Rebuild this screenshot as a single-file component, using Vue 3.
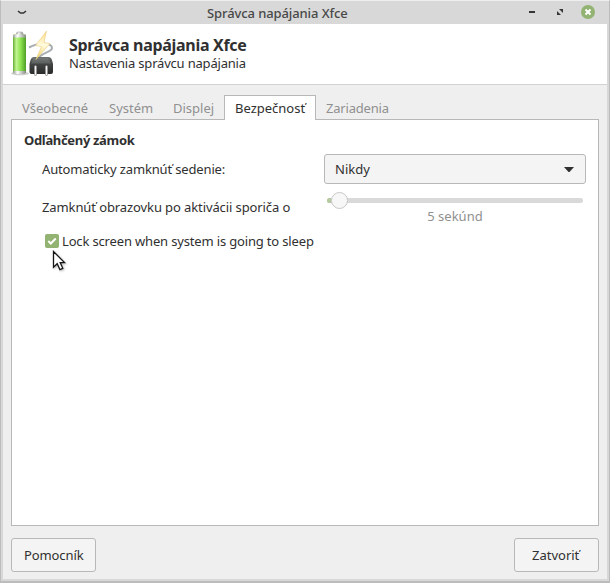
<script setup>
import { ref } from 'vue'

const tabs = [
  { name: 'Všeobecné', key: 'general' },
  { name: 'Systém', key: 'system' },
  { name: 'Displej', key: 'display' },
  { name: 'Bezpečnosť', key: 'security' },
  { name: 'Zariadenia', key: 'devices' },
]
const active = ref('security')
const lockOnSleep = ref(true)
</script>

<template>
  <div class="window">
    <header class="titlebar">
      <svg class="menu" width="10" height="6" viewBox="0 0 10 6"><path d="M1 1L3.500 3h3L9 1" fill="none" stroke="#353535" stroke-width="1.600" /></svg>
      <span class="title">Správca napájania Xfce</span>
      <div class="controls">
        <svg width="6" height="2"><path d="M0 0h6v2H0z" fill="#353535" /></svg>
        <svg width="6" height="6" viewBox="0 0 6 6"><path d="M2 0h4v4zM0 2v4h4z" fill="#353535" /></svg>
        <svg width="14" height="14" viewBox="0 0 14 14"><circle cx="7" cy="7" r="7" fill="#92b372" /><path d="M4.500 4.500l5 5m0-5l-5 5" stroke="#fff" stroke-width="2" /></svg>
      </div>
    </header>

    <section class="banner">
      <svg class="logo" width="48" height="48" viewBox="0 0 48 48">
        <defs>
          <linearGradient id="cell"><stop offset="0" stop-color="#63ad32" /><stop offset=".25" stop-color="#c2f592" /><stop offset=".6" stop-color="#8be24c" /><stop offset="1" stop-color="#4f9e29" /></linearGradient>
          <linearGradient id="metal"><stop offset="0" stop-color="#999" /><stop offset=".35" stop-color="#fff" /><stop offset="1" stop-color="#888" /></linearGradient>
          <linearGradient id="bolt" x2="0" y2="1"><stop offset="0" stop-color="#ffdc85" /><stop offset=".5" stop-color="#fffbe0" /><stop offset="1" stop-color="#f4ce58" /></linearGradient>
          <linearGradient id="plug" x2="0" y2="1"><stop offset="0" stop-color="#6e7270" /><stop offset=".35" stop-color="#444745" /><stop offset="1" stop-color="#282b29" /></linearGradient>
        </defs>
        <ellipse cx="9" cy="43.500" rx="9" ry="1.800" fill="#d0d0d0" />
        <rect x="5.500" y="2" width="6.500" height="4" rx="1.500" fill="url(#metal)" stroke="#999" stroke-width=".5" />
        <path d="M2 5.500Q2 4 8.500 4T15 5.500V42Q15 44 8.500 44T2 42z" fill="url(#cell)" />
        <path d="M2 5.500Q2 4 8.500 4T15 5.500V7.500H2zM2 41h13v1Q15 44 8.500 44T2 42z" fill="url(#metal)" />
        <path d="M18 17.500C28 12 41 13 41 18C41 22 33 22 28 27" fill="none" stroke="#a9aeb0" stroke-width="2" />
        <path d="M23 27h14.500q2.500 0 3.500 3l1 4v8q0 2-2 2H20.500q-2 0-2-2v-8l1-4q1-3 3.500-3z" fill="url(#plug)" />
        <path d="M22.500 28h14.500l3 5.500H20z" fill="#858987" opacity=".4" />
        <path d="M24.500 36.500v8M35.500 36.500v8" stroke="#777" stroke-width="2.600" stroke-linecap="round" />
        <path d="M24.500 36.500v8M35.500 36.500v8" stroke="#f4f4f4" stroke-width="1.600" stroke-linecap="round" />
        <path d="M35.500 1L24.500 15.500l6 1-5.500 13L39 13.500l-6-1z" fill="url(#bolt)" stroke="#edcc80" stroke-width=".6" />
      </svg>
      <div class="heading">
        <h1>Správca napájania Xfce</h1>
        <p>Nastavenia správcu napájania</p>
      </div>
    </section>

    <main class="content">
      <nav class="tabs">
        <button v-for="tab in tabs" :key="tab.key" :class="['tab', tab.key, { active: active === tab.key }]" @click="active = tab.key">{{ tab.name }}</button>
      </nav>
      <div class="page">
        <h2>Odľahčený zámok</h2>
        <div class="row">
          <span class="label auto">Automaticky zamknúť sedenie:</span>
          <button class="combo">
            <span>Nikdy</span>
            <svg width="10" height="5" viewBox="0 0 10 5"><path d="M0 0h10L5.500 5h-1z" fill="#303030" /></svg>
          </button>
        </div>
        <div class="row delay">
          <span class="label screen">Zamknúť obrazovku po aktivácii sporiča o</span>
          <div class="scale">
            <div class="track"><div class="fill"></div><div class="knob"></div></div>
            <span class="value">5 sekúnd</span>
          </div>
        </div>
        <div class="check" @click="lockOnSleep = !lockOnSleep">
          <svg width="14" height="14" viewBox="0 0 14 14"><rect width="14" height="14" rx="2" fill="#92b372" /><path v-if="lockOnSleep" d="M3.300 7l2.500 2.500L10.700 4.500" fill="none" stroke="#fff" stroke-width="2" /></svg>
          <span>Lock screen when system is going to sleep</span>
        </div>
      </div>
      <footer>
        <button class="action help">Pomocník</button>
        <button class="action close">Zatvoriť</button>
      </footer>
    </main>
    <svg class="pointer" width="15" height="22" viewBox="0 0 15 22"><path d="M1.500 1.500v15.700l3.700-3.500 2.700 5.900 2.900-1.300-2.600-5.700h4.300z" fill="#fff" stroke="#151515" stroke-width="1.300" /></svg>
  </div>
</template>

<style>
body { margin: 0; overflow: hidden; background: #fff; }
</style>

<style scoped>
* { box-sizing: border-box; }
.window { position: relative; display: flex; flex-direction: column; width: 610px; height: 583px; border: 1px solid #bcbcbc; border-top-color: #eee; border-width: 1px 1px 2px; background: #d8d8d8; padding: 0 2px 2px; color: #303030; font: 13px/18px "Noto Sans", sans-serif; white-space: nowrap; }
button { font: inherit; color: inherit; margin: 0; padding: 0; text-align: left; }
svg { display: block; flex: none; }
.titlebar { height: 23px; display: flex; align-items: center; flex: none; }
.menu { margin-left: 14px; }
.title { width: 142px; margin-left: 180px; color: #484848; font-weight: 500; letter-spacing: -.1px; }
.controls { display: flex; align-items: center; margin-left: auto; gap: 22px; padding-right: 12px; margin-top: -1px; }
.controls svg:last-child { margin-left: -4px; }
.banner { height: 61px; flex: none; background: #fff; border-bottom: 1px solid #d2d2d2; display: flex; padding: 6px 0 0 8px; }
.heading { margin-left: 10px; padding-top: 5px; }
h1, h2, p { margin: 0; }
h1 { font-size: 16px; line-height: 20px; letter-spacing: -.3px; }
p { line-height: 16px; letter-spacing: -.19px; }
.content { flex: 1; display: flex; flex-direction: column; min-height: 0; background: #efefef; padding: 10px 8px 7px; }
.tabs { height: 25px; display: flex; align-items: flex-start; position: relative; z-index: 1; flex: none; }
.tab { height: 25px; border: 1px solid transparent; border-bottom: 0; background: transparent; color: #909090; padding: 0 0 0 10px; flex: none; }
.general { width: 87px; }
.system { width: 64px; }
.display { width: 62px; }
.security { width: 92px; }
.devices { width: 88px; padding-left: 9px; letter-spacing: -.2px; }
.active { background: #fff; color: #303030; border-color: #b8b8b8; }
.page { height: 407px; flex: none; border: 1px solid #b8b8b8; background: #fff; padding: 11px 12px; margin-top: -1px; }
h2 { font-size: 13px; line-height: 19px; letter-spacing: -.33px; }
.row { display: flex; align-items: center; justify-content: space-between; height: 30px; margin-top: 4px; padding-left: 18px; }
.auto { letter-spacing: -.15px; }
.combo { width: 262px; height: 30px; display: flex; align-items: center; justify-content: space-between; border: 1px solid #b8b8b8; border-radius: 3px; background: #f4f4f4; padding: 0 11px 0 10px; }
.delay { height: 38px; margin-top: 5px; align-items: flex-start; }
.screen { padding-top: 9px; letter-spacing: -.1px; }
.scale { width: 256px; margin-right: 3px; padding-top: 9px; }
.track { height: 5px; border-radius: 3px; background: #d9d9d9; display: flex; align-items: center; }
.fill { width: 4px; height: 5px; border-radius: 3px 0 0 3px; background: #b4c99f; }
.knob { width: 17px; height: 17px; border: 1px solid #c8c8c8; border-radius: 50%; background: #f7f7f7; flex: none; }
.value { display: block; text-align: center; color: #909090; padding-top: 4px; }
.check { display: flex; align-items: center; gap: 3px; height: 20px; margin: 4px 0 0 21px; letter-spacing: -.16px; }
footer { display: flex; justify-content: space-between; margin-top: 12px; }
.action { height: 34px; width: 85px; border: 1px solid #b8b8b8; border-radius: 3px; background: #f4f4f4; padding-left: 12px; letter-spacing: -.1px; }
.close { padding-left: 17px; letter-spacing: 0; }
.pointer { position: absolute; left: 51px; top: 249px; filter: drop-shadow(1px 1px 1px #0004); }
</style>
